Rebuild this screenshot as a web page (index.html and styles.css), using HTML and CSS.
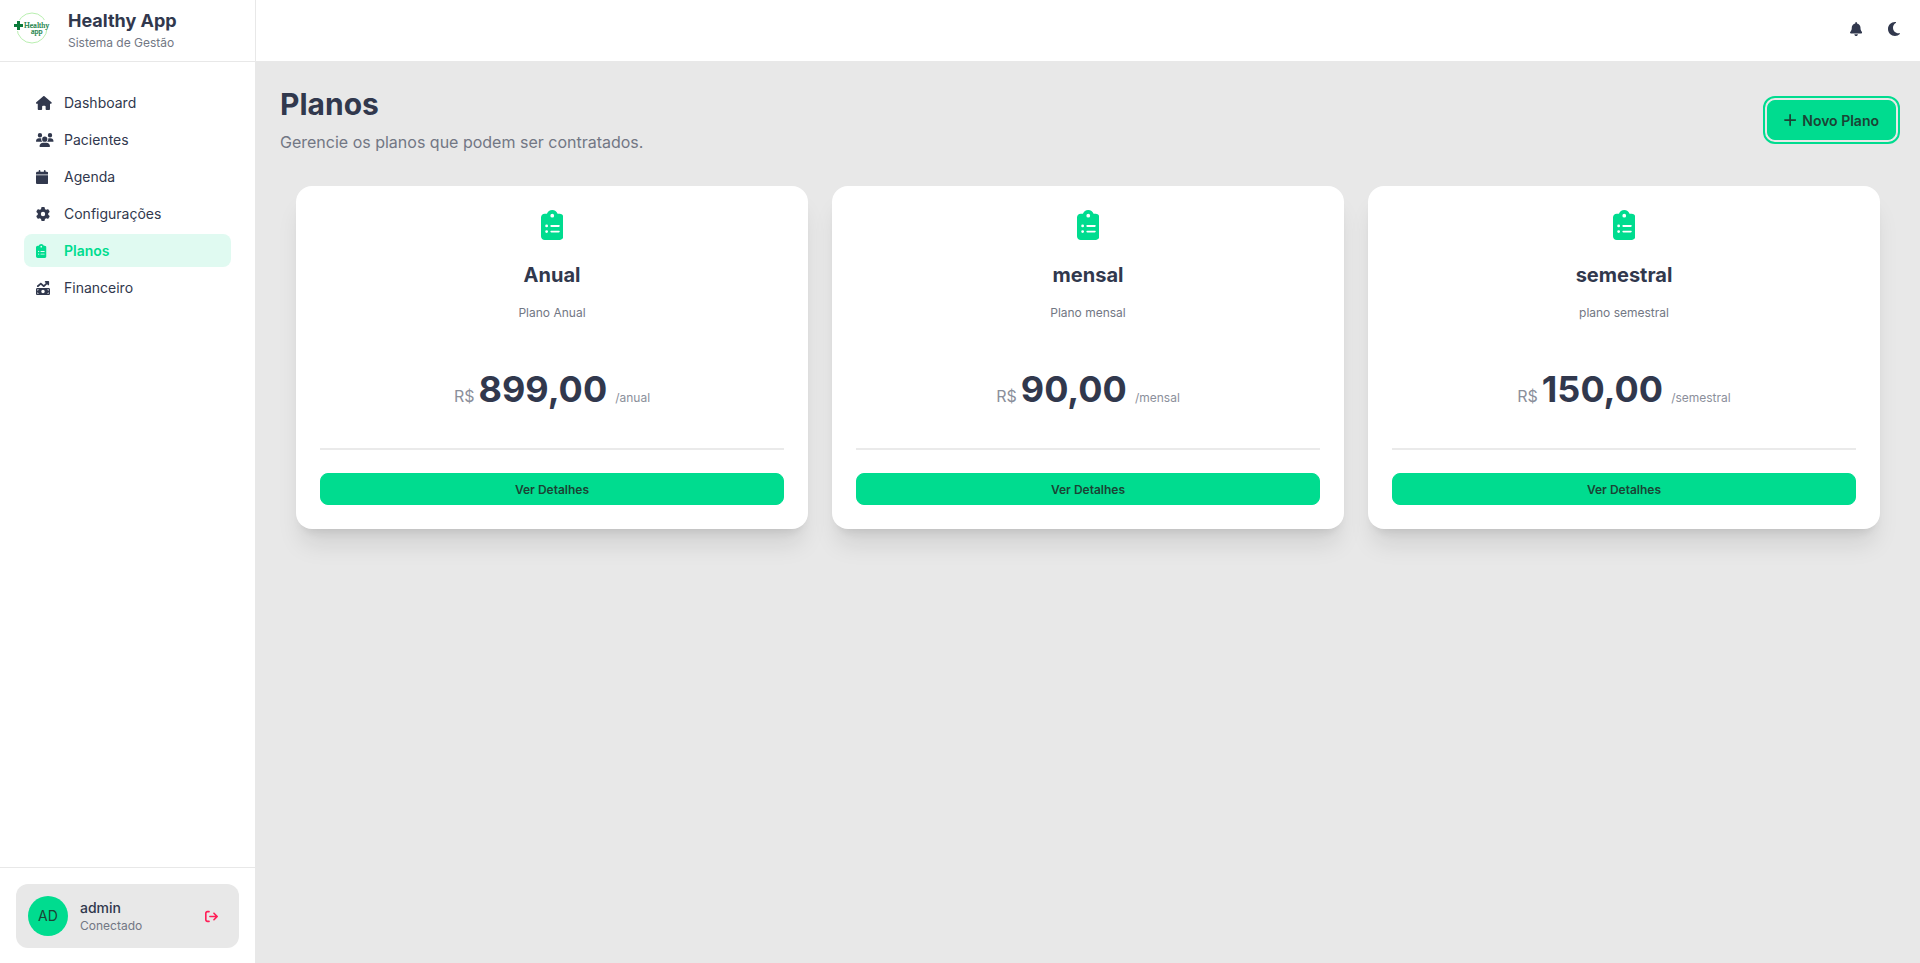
FILE: index.html
```html
<!DOCTYPE html>
<html lang="pt-BR">
<head>
<meta charset="UTF-8" />
<meta name="viewport" content="width=device-width, initial-scale=1" />
<title>Healthy App - Planos</title>
<link rel="stylesheet" href="styles.css">
</head>
<body>

<svg class="sprite" aria-hidden="true">
  <symbol id="clipboard" viewBox="0 0 384 512"><path d="M192 0c-41.8 0-77.4 26.7-90.5 64H64C28.7 64 0 92.7 0 128V448c0 35.3 28.7 64 64 64H320c35.3 0 64-28.7 64-64V128c0-35.3-28.7-64-64-64H282.5C269.4 26.7 233.8 0 192 0zm0 64a32 32 0 1 1 0 64 32 32 0 1 1 0-64zM72 272a24 24 0 1 1 48 0 24 24 0 1 1 -48 0zm104-16H304c8.8 0 16 7.2 16 16s-7.2 16-16 16H176c-8.8 0-16-7.2-16-16s7.2-16 16-16zM72 368a24 24 0 1 1 48 0 24 24 0 1 1 -48 0zm88 0c0-8.8 7.2-16 16-16H304c8.8 0 16 7.2 16 16s-7.2 16-16 16H176c-8.8 0-16-7.2-16-16z"/></symbol>
</svg>

<div class="layout">
  <aside class="sidebar">
    <div class="brand">
      <svg class="logo" viewBox="0 0 40 40" aria-hidden="true">
        <circle cx="20" cy="20" r="15" fill="none" stroke="#b9efb0" stroke-width="1"/>
        <path fill="#fff" d="M0 12h38v10H32v5H18v-4H0z"/>
        <path fill="#0b7a3b" d="M5 13h3v3h3v3H8v3H5v-3H2v-3h3z"/>
        <text x="12" y="20">Healthy</text>
        <text x="19" y="26">app</text>
      </svg>
      <div>
        <div class="brand-name">Healthy App</div>
        <div class="brand-sub">Sistema de Gestão</div>
      </div>
    </div>

    <nav class="menu">
      <a href="#">
        <span class="icon"><svg viewBox="0 0 576 512"><path d="M575.8 255.5c0 18-15 32.1-32 32.1h-32l.7 160.2c0 2.7-.2 5.4-.5 8.1V472c0 22.1-17.9 40-40 40H456c-1.1 0-2.2 0-3.3-.1c-1.4 .1-2.8 .1-4.2 .1H416 392c-22.1 0-40-17.9-40-40V448 384c0-17.7-14.3-32-32-32H256c-17.7 0-32 14.3-32 32v64 24c0 22.1-17.9 40-40 40H160 128.1c-1.5 0-3-.1-4.5-.2c-1.2 .1-2.4 .2-3.6 .2H104c-22.1 0-40-17.9-40-40V360c0-.9 0-1.9 .1-2.8V287.6H32c-18 0-32-14-32-32.1c0-9 3-17 10-24L266.4 8c7-7 15-8 22-8s15 2 21 7L564.8 231.5c8 7 12 15 11 24z"/></svg></span>
        Dashboard
      </a>
      <a href="#">
        <span class="icon"><svg viewBox="0 0 640 512"><path d="M144 0a80 80 0 1 1 0 160A80 80 0 1 1 144 0zM512 0a80 80 0 1 1 0 160A80 80 0 1 1 512 0zM0 298.7C0 239.8 47.8 192 106.7 192h42.7c15.9 0 31 3.5 44.6 9.7c-1.3 7.2-1.9 14.7-1.9 22.3c0 38.2 16.8 72.5 43.3 96c-.2 0-.4 0-.7 0H21.3C9.6 320 0 310.4 0 298.7zM405.3 320c-.2 0-.4 0-.7 0c26.6-23.5 43.3-57.8 43.3-96c0-7.6-.7-15-1.9-22.3c13.6-6.3 28.7-9.7 44.6-9.7h42.7C592.2 192 640 239.8 640 298.7c0 11.8-9.6 21.3-21.3 21.3H405.3zM224 224a96 96 0 1 1 192 0 96 96 0 1 1 -192 0zM128 485.3C128 411.7 187.7 352 261.3 352H378.7C452.3 352 512 411.7 512 485.3c0 14.7-11.9 26.7-26.7 26.7H154.7c-14.7 0-26.7-11.9-26.7-26.7z"/></svg></span>
        Pacientes
      </a>
      <a href="#">
        <span class="icon"><svg viewBox="0 0 448 512"><path d="M96 32V64H48C21.5 64 0 85.5 0 112v48H448V112c0-26.5-21.5-48-48-48H352V32c0-17.7-14.3-32-32-32s-32 14.3-32 32V64H160V32c0-17.7-14.3-32-32-32S96 14.3 96 32zM448 192H0V464c0 26.5 21.5 48 48 48H400c26.5 0 48-21.5 48-48V192z"/></svg></span>
        Agenda
      </a>
      <a href="#">
        <span class="icon"><svg viewBox="0 0 512 512"><path d="M495.9 166.6c3.2 8.7 .5 18.4-6.4 24.6l-43.3 39.4c1.1 8.3 1.7 16.8 1.7 25.4s-.6 17.1-1.7 25.4l43.3 39.4c6.9 6.2 9.6 15.9 6.4 24.6c-4.4 11.9-9.7 23.3-15.8 34.3l-4.7 8.1c-6.6 11-14 21.4-22.1 31.2c-5.9 7.2-15.7 9.6-24.5 6.8l-55.7-17.7c-13.4 10.3-28.2 18.9-44 25.4l-12.5 57.1c-2 9.1-9 16.3-18.2 17.8c-13.8 2.3-28 3.5-42.5 3.5s-28.7-1.2-42.5-3.5c-9.2-1.5-16.2-8.7-18.2-17.8l-12.5-57.1c-15.8-6.5-30.6-15.1-44-25.4L83.1 425.9c-8.8 2.8-18.6 .3-24.5-6.8c-8.1-9.8-15.5-20.2-22.1-31.2l-4.7-8.1c-6.1-11-11.4-22.4-15.8-34.3c-3.2-8.7-.5-18.4 6.4-24.6l43.3-39.4C64.6 273.1 64 264.6 64 256s.6-17.1 1.7-25.4L22.4 191.2c-6.9-6.2-9.6-15.9-6.4-24.6c4.4-11.9 9.7-23.3 15.8-34.3l4.7-8.1c6.6-11 14-21.4 22.1-31.2c5.9-7.2 15.7-9.6 24.5-6.8l55.7 17.7c13.4-10.3 28.2-18.9 44-25.4l12.5-57.1c2-9.1 9-16.3 18.2-17.8C227.3 1.2 241.5 0 256 0s28.7 1.2 42.5 3.5c9.2 1.5 16.2 8.7 18.2 17.8l12.5 57.1c15.8 6.5 30.6 15.1 44 25.4l55.7-17.7c8.8-2.8 18.6-.3 24.5 6.8c8.1 9.8 15.5 20.2 22.1 31.2l4.7 8.1c6.1 11 11.4 22.4 15.8 34.3zM256 336a80 80 0 1 0 0-160 80 80 0 1 0 0 160z"/></svg></span>
        Configurações
      </a>
      <a href="#" class="active" aria-current="page">
        <span class="icon"><svg viewBox="0 0 384 512"><use href="#clipboard"/></svg></span>
        Planos
      </a>
      <a href="#">
        <span class="icon"><svg viewBox="0 0 512 512"><path d="M470.7 9.4c3 3.1 5.3 6.6 6.9 10.3s2.4 7.8 2.4 12.2l0 .1v0 96c0 17.7-14.3 32-32 32s-32-14.3-32-32V109.3L310.6 214.6c-11.8 11.8-30.8 12.6-43.5 1.7L176 138.1 84.8 216.3c-13.4 11.5-33.6 9.9-45.1-3.5s-9.9-33.6 3.5-45.1l112-96c12-10.3 29.7-10.3 41.7 0l89.5 76.7L370.7 64H352c-17.7 0-32-14.3-32-32s14.3-32 32-32h96 0c8.8 0 16.8 3.6 22.6 9.3l.1 .1zM0 304c0-26.5 21.5-48 48-48H464c26.5 0 48 21.5 48 48V464c0 26.5-21.5 48-48 48H48c-26.5 0-48-21.5-48-48V304zM48 416v48H96c0-26.5-21.5-48-48-48zM96 304H48v48c26.5 0 48-21.5 48-48zM464 416c-26.5 0-48 21.5-48 48h48V416zM416 304c0 26.5 21.5 48 48 48V304H416zm-96 80a64 64 0 1 0 -128 0 64 64 0 1 0 128 0z"/></svg></span>
        Financeiro
      </a>
    </nav>

    <div class="sidebar-footer">
      <div class="user">
        <div class="avatar">AD</div>
        <div class="user-info">
          <div class="user-name">admin</div>
          <div class="user-status">Conectado</div>
        </div>
        <button class="icon-btn logout" aria-label="Sair">
          <svg viewBox="0 0 512 512"><path d="M502.6 278.6c12.5-12.5 12.5-32.8 0-45.3l-128-128c-12.5-12.5-32.8-12.5-45.3 0s-12.5 32.8 0 45.3L402.7 224 192 224c-17.7 0-32 14.3-32 32s14.3 32 32 32l210.7 0-73.4 73.4c-12.5 12.5-12.5 32.8 0 45.3s32.8 12.5 45.3 0l128-128zM160 96c17.7 0 32-14.3 32-32s-14.3-32-32-32L96 32C43 32 0 75 0 128L0 384c0 53 43 96 96 96l64 0c17.7 0 32-14.3 32-32s-14.3-32-32-32l-64 0c-17.7 0-32-14.3-32-32l0-256c0-17.7 14.3-32 32-32l64 0z"/></svg>
        </button>
      </div>
    </div>
  </aside>

  <div class="content">
    <header class="topbar">
      <button class="icon-btn" aria-label="Notificações">
        <svg viewBox="0 0 448 512"><path d="M224 0c-17.7 0-32 14.3-32 32V51.2C119 66 64 130.6 64 208v18.8c0 47-17.3 92.4-48.5 127.6l-7.4 8.3c-8.4 9.4-10.4 22.9-5.3 34.4S19.4 416 32 416H416c12.6 0 24-7.4 29.2-18.9s3.1-25-5.3-34.4l-7.4-8.3C401.3 319.2 384 273.9 384 226.8V208c0-77.4-55-142-128-156.8V32c0-17.7-14.3-32-32-32zm45.3 493.3c12-12 18.7-28.3 18.7-45.3H224 160c0 17 6.7 33.3 18.7 45.3s28.3 18.7 45.3 18.7s33.3-6.7 45.3-18.7z"/></svg>
      </button>
      <button class="icon-btn" aria-label="Tema escuro">
        <svg viewBox="0 32 384 448"><path d="M223.5 32C100 32 0 132.3 0 256S100 480 223.5 480c60.6 0 115.5-24.2 155.8-63.4c5-4.9 6.3-12.5 3.1-18.7s-10.1-9.7-17-8.5c-9.8 1.7-19.8 2.6-30.1 2.6c-96.9 0-175.5-78.8-175.5-176c0-65.8 36-123.1 89.3-153.3c6.1-3.5 9.2-10.5 7.7-17.3s-7.3-11.9-14.3-12.5c-6.3-.5-12.6-.8-19-.8z"/></svg>
      </button>
    </header>

    <main class="page">
      <div class="page-header">
        <div>
          <h1>Planos</h1>
          <p>Gerencie os planos que podem ser contratados.</p>
        </div>
        <button class="btn btn-new">
          <svg viewBox="0 0 448 512"><path d="M256 64c0-17.7-14.3-32-32-32s-32 14.3-32 32V224H32c-17.7 0-32 14.3-32 32s14.3 32 32 32H192V448c0 17.7 14.3 32 32 32s32-14.3 32-32V288H416c17.7 0 32-14.3 32-32s-14.3-32-32-32H256V64z"/></svg>
          Novo Plano
        </button>
      </div>

      <div class="plans">
        <article class="card">
          <svg class="card-icon" viewBox="0 0 384 512"><use href="#clipboard"/></svg>
          <h2>Anual</h2>
          <p class="desc">Plano Anual</p>
          <div class="price">
            <span class="currency">R$</span>
            <strong>899,00</strong>
            <span class="period">/anual</span>
          </div>
          <div class="card-actions">
            <button class="btn btn-details">Ver Detalhes</button>
          </div>
        </article>

        <article class="card">
          <svg class="card-icon" viewBox="0 0 384 512"><use href="#clipboard"/></svg>
          <h2>mensal</h2>
          <p class="desc">Plano mensal</p>
          <div class="price">
            <span class="currency">R$</span>
            <strong>90,00</strong>
            <span class="period">/mensal</span>
          </div>
          <div class="card-actions">
            <button class="btn btn-details">Ver Detalhes</button>
          </div>
        </article>

        <article class="card">
          <svg class="card-icon" viewBox="0 0 384 512"><use href="#clipboard"/></svg>
          <h2>semestral</h2>
          <p class="desc">plano semestral</p>
          <div class="price">
            <span class="currency">R$</span>
            <strong>150,00</strong>
            <span class="period">/semestral</span>
          </div>
          <div class="card-actions">
            <button class="btn btn-details">Ver Detalhes</button>
          </div>
        </article>
      </div>
    </main>
  </div>
</div>

</body>
</html>
```
FILE: styles.css
```css
:root {
  --primary: #00dc8f;
  --primary-text: #1b4435;
  --primary-soft: #e0faf1;
  --text: #31384d;
  --muted: #727784;
  --bg: #e8e8e8;
  --white: #ffffff;
  --danger: #ff1f57;
}
* {
  box-sizing: border-box;
}
body {
  margin: 0;
  background-color: var(--bg);
  color: var(--text);
  font-family: Inter, "Liberation Sans", sans-serif;
  font-size: 14px;
  line-height: 20px;
}
h1, h2, p {
  margin: 0;
}
svg {
  fill: currentColor;
  display: block;
}
button {
  font-family: inherit;
  border: none;
  cursor: pointer;
}
.sprite {
  display: none;
}
.layout {
  display: flex;
  min-height: 100vh;
}

/* Sidebar */
.sidebar {
  width: 256px;
  flex-shrink: 0;
  display: flex;
  flex-direction: column;
  background-color: var(--white);
  border-right: 1px solid var(--bg);
}
.brand {
  display: flex;
  gap: 16px;
  height: 62px;
  padding: 8px 12px;
  border-bottom: 1px solid var(--bg);
}
.logo {
  width: 40px;
  height: 40px;
}
.logo text {
  font-family: "Liberation Serif", serif;
  font-size: 8px;
  fill: #0b7a3b;
  stroke: #0b7a3b;
  stroke-width: 0.2px;
}
.brand-name {
  font-size: 18px;
  font-weight: 700;
  line-height: 26px;
}
.brand-sub {
  font-size: 12px;
  line-height: 18px;
  color: var(--muted);
}
.menu {
  flex: 1;
  display: flex;
  flex-direction: column;
  gap: 4px;
  padding: 24px;
}
.menu a {
  display: flex;
  align-items: center;
  gap: 12px;
  height: 33px;
  padding: 0 12px;
  border-radius: 8px;
  color: var(--text);
  text-decoration: none;
}
.menu a.active {
  background-color: var(--primary-soft);
  color: var(--primary);
  font-weight: 600;
}
.icon {
  width: 16px;
  flex-shrink: 0;
}
.icon svg {
  height: 14px;
}
.sidebar-footer {
  padding: 16px 16px 15px;
  border-top: 1px solid var(--bg);
}
.user {
  display: flex;
  align-items: center;
  gap: 12px;
  padding: 12px;
  border-radius: 12px;
  background-color: var(--bg);
}
.avatar {
  width: 40px;
  height: 40px;
  display: flex;
  align-items: center;
  justify-content: center;
  border-radius: 50%;
  background-color: var(--primary);
  color: var(--primary-text);
}
.user-info {
  flex: 1;
}
.user-name {
  font-weight: 500;
}
.user-status {
  font-size: 12px;
  line-height: 16px;
  color: var(--muted);
}

/* Topbar */
.content {
  flex: 1;
  min-width: 0;
}
.topbar {
  display: flex;
  justify-content: flex-end;
  align-items: center;
  gap: 6px;
  height: 62px;
  padding: 0 10px 4px;
  background-color: var(--white);
  border-bottom: 1px solid var(--bg);
}
.icon-btn {
  width: 32px;
  height: 32px;
  display: flex;
  align-items: center;
  justify-content: center;
  padding: 0;
  background: none;
  color: var(--text);
}
.icon-btn svg {
  height: 14px;
}
.icon-btn.logout {
  color: var(--danger);
}
.logout svg {
  height: 13px;
}

/* Page */
.page {
  padding: 24px;
}
.page-header {
  display: flex;
  justify-content: space-between;
  align-items: center;
  margin-bottom: 32px;
}
.page-header h1 {
  font-size: 30px;
  font-weight: 700;
  line-height: 36px;
}
.page-header p {
  margin-top: 8px;
  font-size: 16px;
  line-height: 24px;
  color: var(--muted);
}
.btn {
  display: flex;
  align-items: center;
  justify-content: center;
  border: 1px solid var(--primary);
  border-radius: 8px;
  background-color: var(--primary);
  color: var(--primary-text);
  font-weight: 600;
}
.btn-new {
  gap: 6px;
  height: 40px;
  padding: 0 16px;
  font-size: 14px;
  outline: 2px solid var(--primary);
  outline-offset: 2px;
}
.btn-new svg {
  height: 14px;
}
.plans {
  display: grid;
  grid-template-columns: repeat(3, 1fr);
  gap: 24px;
  padding: 0 16px;
}
.card {
  display: flex;
  flex-direction: column;
  align-items: center;
  padding: 24px;
  border-radius: 16px;
  background-color: var(--white);
  box-shadow: 0 20px 25px -5px rgba(0, 0, 0, 0.1), 0 8px 10px -6px rgba(0, 0, 0, 0.1);
}
.card-icon {
  height: 30px;
  color: var(--primary);
}
.card h2 {
  margin-top: 21px;
  font-size: 20px;
  font-weight: 700;
  line-height: 28px;
}
.desc {
  margin-top: 16px;
  font-size: 12px;
  line-height: 16px;
  color: var(--muted);
}
.price {
  display: flex;
  align-items: baseline;
  gap: 4px;
  margin-top: 48px;
}
.price strong {
  font-size: 36px;
  font-weight: 700;
  line-height: 40px;
}
.currency {
  font-size: 16px;
  color: #8b8f9b;
}
.period {
  margin-left: 4px;
  font-size: 12px;
  color: #8b8f9b;
}
.card-actions {
  width: 100%;
  margin-top: 39px;
  padding-top: 23px;
  border-top: 2px solid #eaeaea;
}
.btn-details {
  width: 100%;
  height: 32px;
  font-size: 12px;
}
```
